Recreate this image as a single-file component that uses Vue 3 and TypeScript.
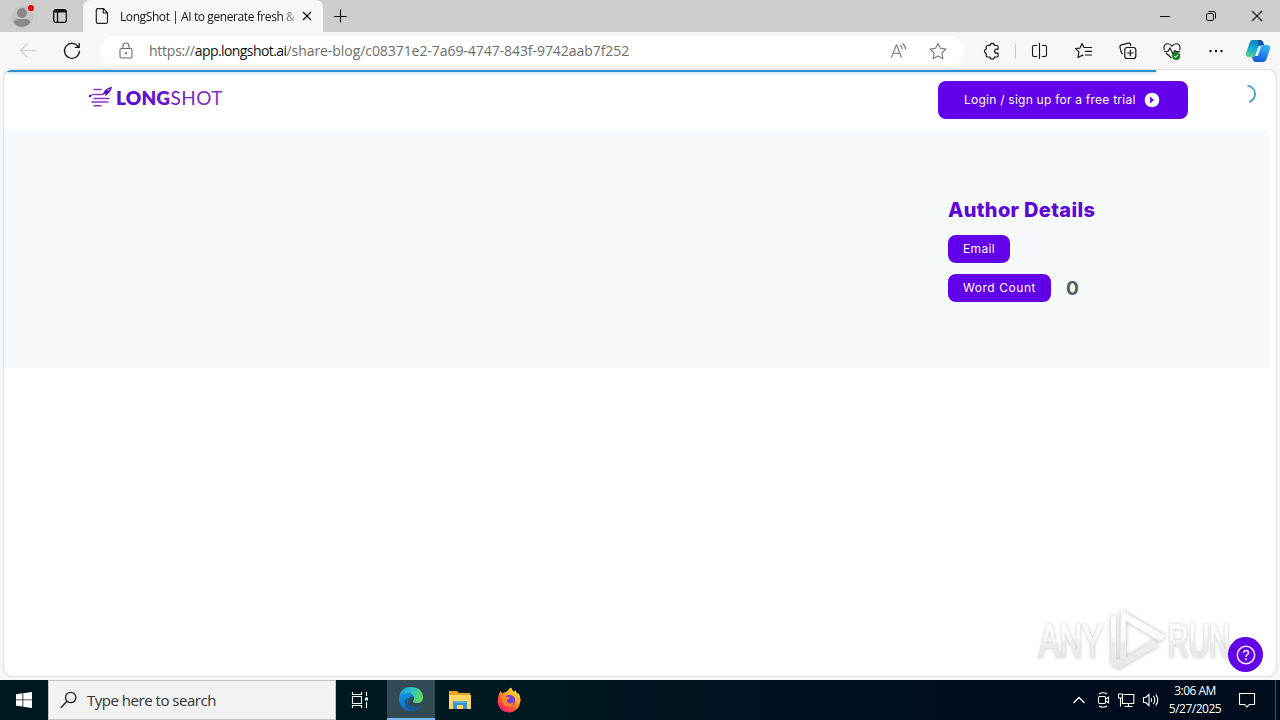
<script setup lang="ts">
interface UrlPart { text: string; kind: string }

const urlParts: UrlPart[] = [
  { text: 'https://', kind: 'scheme' },
  { text: 'app.longshot.ai', kind: 'host' },
  { text: '/share-blog/c08371e2-7a69-4747-843f-9742aab7f252', kind: 'path' },
]
const wordCount = 0
</script>

<template>
  <div class="desktop">
    <header class="tabstrip">
      <button class="profile" aria-label="Profile">
        <svg width="32" height="32" viewBox="0 0 32 32">
          <circle cx="16" cy="17" r="11" fill="#c6c4c3" />
          <circle cx="16" cy="13" r="5" fill="#8c8886" />
          <path d="M8 22.500q0-3.500 4-3.500h8q4 0 4 3.500-3 4.300-8 4.300t-8-4.300z" fill="#8c8886" />
          <circle cx="25" cy="8" r="3.100" fill="#e30613" />
        </svg>
      </button>
      <svg class="workspaces" width="16" height="16" viewBox="0 0 16 16" fill="none" stroke="#111" stroke-width="1.300">
        <rect x="1.700" y="1.700" width="12.600" height="12.600" rx="2.200" />
        <path d="M2 3.200h12" stroke-width="2.600" /><path d="M5.500 4v10" />
      </svg>
      <div class="tab">
        <svg width="14" height="18" viewBox="0 0 14 18" fill="none" stroke="#222" stroke-width="1.200">
          <path d="M2.800 1.600h5.700l4 4.200v9.100q0 1.500-1.500 1.500H2.800q-1.500 0-1.500-1.500V3.100q0-1.500 1.500-1.500zM8.300 1.800V6h4.200" />
        </svg>
        <span class="tab-title">LongShot | AI to generate fresh &amp;</span>
        <svg class="tab-close" width="10" height="10" viewBox="0 0 10 10" stroke="#111" stroke-width="1.200"><path d="M1 1l8 8M9 1L1 9" /></svg>
      </div>
      <svg class="new-tab" width="14" height="14" viewBox="0 0 14 14" stroke="#111" stroke-width="1.100"><path d="M6.500 .5v13M0 7.500h13" /></svg>
      <div class="window-buttons">
        <svg width="46" height="32" viewBox="0 0 46 32" stroke="#111"><path d="M18 16.500h10" /></svg>
        <svg width="46" height="32" viewBox="0 0 46 32" fill="none" stroke="#111">
          <rect x="18.500" y="13.500" width="7" height="7" rx="1.500" /><path d="M20.500 11.500h5q2 0 2 2v5" />
        </svg>
        <svg width="46" height="32" viewBox="0 0 46 32" stroke="#111" stroke-width="1.100"><path d="M18 11l10 10M28 11L18 21" /></svg>
      </div>
    </header>

    <nav class="toolbar">
      <svg class="back" width="18" height="18" viewBox="0 0 18 18" fill="none" stroke="#cbcbcb" stroke-width="1.100"><path d="M17 8.500H2M8.500 1.500l-7 7 7 7" /></svg>
      <svg class="reload" width="18" height="18" viewBox="0 0 18 18" fill="none" stroke="#1b1b1b" stroke-width="1.300"><path d="M15.500 5A7.500 7.500 0 1 0 16.500 9M16.200 1v4.300h-4.400" /></svg>
      <div class="address">
        <svg class="lock" width="14" height="18" viewBox="0 0 14 18" fill="none" stroke="#6b6b6b" stroke-width="1.100">
          <rect x="1" y="6.500" width="12" height="9.500" rx="1.500" /><path d="M4 6.500V4a3 3 0 0 1 6 0v2.500" /><circle cx="7" cy="11.300" r=".6" fill="#6b6b6b" />
        </svg>
        <span class="url"><span v-for="part in urlParts" :key="part.kind" :class="part.kind">{{ part.text }}</span></span>
        <svg class="read" width="18" height="18" viewBox="0 0 18 18" fill="none" stroke="#777" stroke-width="1.100">
          <path d="M1.500 15.500L6.300 3h.4l4.800 12.500M3.300 11.200h6.400M10.300 3.200q2 1.500 2.100 4M12.500 1.500q3 2 3.200 6" />
        </svg>
        <svg width="18" height="18" viewBox="0 0 18 18" fill="none" stroke="#777" stroke-width="1.100" stroke-linejoin="round">
          <path d="M9 1.300l2.400 5 5.500.8-4 3.900 1 5.500L9 13.900l-4.900 2.600 1-5.500-4-3.900 5.500-.8z" />
        </svg>
      </div>
      <svg class="extensions" width="20" height="20" viewBox="0 0 20 20" fill="none" stroke="#161616" stroke-width="1.200" stroke-linejoin="round">
        <path d="M5.500 4.500H8a2.200 2.200 0 0 1 4.400 0h2.400q1.300 0 1.300 1.300v2.400h-1.400a2 2 0 0 0 0 4h1.400v2.500q0 1.300-1.300 1.300h-2.400a2.200 2.200 0 0 1-4.400 0H5.500q-1.300 0-1.300-1.300v-2.300a2.200 2.200 0 0 1 0-4.300V5.800q0-1.300 1.300-1.300z" />
      </svg>
      <span class="separator" />
      <div class="actions">
        <svg width="20" height="20" viewBox="0 0 20 20" fill="none" stroke="#161616" stroke-width="1.100">
          <path d="M7 4.500H4q-1.500 0-1.500 1.500v8q0 1.500 1.500 1.500h3M12 4.500h3q1.500 0 1.500 1.500v8q0 1.500-1.500 1.500h-3M9.500 2v16" />
        </svg>
        <svg width="20" height="20" viewBox="0 0 20 20" fill="none" stroke="#161616" stroke-width="1.200" stroke-linejoin="round">
          <path d="M12 6.500h-2L8 2.500 6 7.100l-4.600.4 3.500 3.400L4 16.500l4.300-2.300 1 .8M12 6.500h6M11 10.300h7M11 14h7" />
        </svg>
        <svg width="20" height="20" viewBox="0 0 20 20" fill="none" stroke="#161616" stroke-width="1.200">
          <rect x="6.800" y="6.500" width="11" height="11" rx="2.300" /><path d="M12.300 8.800v6.400M9.100 12h6.400M4.800 13q-1-.3-1.500-1.500L2 6.300q-.4-2 1.500-2.500l6.800-1.600q1.600-.3 2.200 1l.5 1.500" />
        </svg>
        <svg width="20" height="20" viewBox="0 0 20 20" fill="none" stroke="#161616" stroke-width="1.100">
          <path d="M2.300 9Q1 4.500 4.300 3.100 7.500 2 10 5.100q2.500-3.100 5.700-2Q19 4.500 17.700 9M4 12l5.500 5M2 10.500h4L8 7l3 6 1.800-3.500 1.200 1h4" />
          <circle cx="14.200" cy="15" r="4" fill="#107c18" stroke="none" /><path d="M12.200 15l1.400 1.300 2.700-2.700" stroke="#d8f0d8" />
        </svg>
        <svg width="20" height="20" viewBox="0 0 20 20" fill="#161616"><circle cx="4.500" cy="10" r="1.200" /><circle cx="10" cy="10" r="1.200" /><circle cx="15.500" cy="10" r="1.200" /></svg>
      </div>
      <svg class="copilot" width="26" height="24" viewBox="0 0 26 24">
        <defs>
          <linearGradient id="cp-a" x1="0.500" y1="0" x2="0.300" y2="1"><stop stop-color="#087dbe" /><stop offset=".5" stop-color="#12aed8" /><stop offset="1" stop-color="#55cf87" /></linearGradient>
          <linearGradient id="cp-b" x1="0.600" y1="0" x2="0.300" y2="1"><stop stop-color="#35b5f4" /><stop offset=".5" stop-color="#2685ed" /><stop offset="1" stop-color="#1657d0" /></linearGradient>
        </defs>
        <path d="M8 1h7q2.500 0 3.200 2.500l.8 2.500h-2.500Q14 6 13.200 8.500l-2.400 7Q10 18 7.500 18H4Q0 18 1 14L4.500 4Q5.500 1 8 1z" fill="url(#cp-a)" />
        <path d="M18 23h-7q-2.500 0-3.200-2.500L7 18q3 0 3.800-2.500l2.400-7Q14 6 16.500 6H22q4 0 3 4l-3.500 10q-1 3-3.500 3z" fill="url(#cp-b)" />
        <path d="M13 1h2q2.500 0 3.200 2.500L19 6h-2.500q-2 0-3 1.500z" fill="#174dac" />
        <path d="M13.800 7h2.500l-3.600 10h-2.500z" fill="#eefbff" />
      </svg>
    </nav>

    <main class="page">
      <div class="progress" />
      <section class="site-header">
        <svg class="logo" width="136" height="24" viewBox="0 0 136 24">
          <defs><linearGradient id="logo-fill" gradientUnits="userSpaceOnUse" x1="0" y1="0" x2="136" y2="0"><stop stop-color="#7027bd" /><stop offset=".3" stop-color="#5609d4" /><stop offset="1" stop-color="#8735c5" /></linearGradient></defs>
          <g fill="none" stroke="#8a35c8" stroke-width="1.400" stroke-linecap="round"><path d="M6 4.500h7M2 11q3-2 6-1.500h7M6 13.500h15M4 17h16M6 20.800h7" /></g>
          <path d="M15 8.500l2-3.500q2-2 7-3.500-.5 4.500-3 6.500l-3.500 3-.7-2.200-2 .6z" fill="#5610bd" /><circle cx="20.500" cy="4.800" r="1" fill="#b899e4" /><circle cx="2" cy="11" r="1.300" fill="#5610bd" />
          <text x="28" y="20" textLength="54" class="logo-bold">LONG</text>
          <text x="82.500" y="20" textLength="52" class="logo-thin">SHOT</text>
        </svg>
        <a class="login">
          <span>Login / sign up for a free trial</span>
          <svg width="16" height="16" viewBox="0 0 16 16"><circle cx="8" cy="8" r="7.300" fill="#fff" /><path d="M6.300 5l3.300 3-3.300 3z" fill="#6200ea" stroke="#6200ea" stroke-width=".7" /></svg>
        </a>
        <svg class="spinner" width="20" height="20" viewBox="0 0 20 20" fill="none" stroke="#4fa4ce" stroke-width="1.900"><path d="M9.500 1.800A8.200 8.200 0 0 1 11 17.900" /></svg>
      </section>
      <section class="article">
        <aside class="author">
          <h2>Author Details</h2>
          <div class="detail"><span class="pill">Email</span></div>
          <div class="detail"><span class="pill wide">Word Count</span><b>{{ wordCount }}</b></div>
        </aside>
      </section>
    </main>

    <div class="watermark">
      <svg width="200" height="68" viewBox="0 0 200 68">
        <defs><linearGradient id="mark-fill" x1="0" y1="0" x2="0" y2="1"><stop stop-color="#fff" /><stop offset=".45" stop-color="#fbfbfb" /><stop offset=".55" stop-color="#ededed" /><stop offset="1" stop-color="#e6e6e6" /></linearGradient></defs>
        <g class="mark-text">
          <text x="3" y="50" textLength="64" lengthAdjust="spacingAndGlyphs">ANY</text>
          <text x="132" y="50" textLength="62" lengthAdjust="spacingAndGlyphs">RUN</text>
        </g>
        <g class="mark-shape">
          <path d="M75 10l5-2v44l4 3v8l-9-6zM85 3l43 25v4l-5 2-33-20v36l27-16 6 4-38 23-5-3v-4l4-3z" />
        </g>
      </svg>
    </div>
    <button class="help" aria-label="Help">
      <svg width="20" height="20" viewBox="0 0 20 20" fill="none" stroke="#f6e9ff" stroke-width="1.500"><circle cx="10" cy="10" r="8.700" /><path d="M7.500 7.800Q7.700 5.500 10 5.500t2.500 2.200q0 1.300-1.500 2.200-1 .7-1 2.100" /><circle cx="10" cy="14.300" r=".4" /></svg>
    </button>

    <footer class="taskbar">
      <div class="start"><svg width="16" height="16" viewBox="0 0 16 16" fill="#fff"><path d="M0 2.300L6.500 1.300v6.200H0zM7.300 1.200L16 0v7.500H7.300zM0 8.300h6.500v6.300L0 13.700zM7.300 8.300H16V16l-8.700-1.200z" /></svg></div>
      <div class="search">
        <svg width="18" height="18" viewBox="0 0 18 18" fill="none" stroke="#222" stroke-width="1.300"><circle cx="10.700" cy="6.500" r="5.200" /><path d="M7 10.300L.7 16.700" /></svg>
        <span>Type here to search</span>
      </div>
      <div class="task">
        <svg width="18" height="18" viewBox="0 0 18 18" fill="none" stroke="#fff" stroke-width="1.100"><path d="M1.500 1v2.500h9V1M1.500 17v-2.500h9V17M1.500 5.500h9v7h-9zM15.500 1v4M15.500 11v6" /><path d="M14 6.500h3v3h-3z" fill="#fff" stroke="none" /></svg>
      </div>
      <div class="task active">
        <svg width="26" height="26" viewBox="0 0 26 26">
          <defs>
            <linearGradient id="edge-a" x1="0" y1="0.300" x2="1" y2="0.500"><stop stop-color="#219bdc" /><stop offset=".5" stop-color="#2cc2c5" /><stop offset="1" stop-color="#65dc55" /></linearGradient>
            <linearGradient id="edge-b" x1="0" y1="0" x2="0.600" y2="1"><stop stop-color="#1796e2" /><stop offset="1" stop-color="#0869bd" /></linearGradient>
          </defs>
          <path d="M1.200 12Q2 1 13 1q11 0 12 10 0 6-6 6-4 0-4-2 2-2 .5-4.500Q13 6.500 8 7.500 3 8.500 1.200 12z" fill="url(#edge-a)" />
          <path d="M1 13Q2 7 8.500 7q5 0 7 4-4-1-5.500 2.500-1.500 4 2 7.500 3.500 3 10.500-.5Q19 25 13 25 2 24.500 1 13z" fill="url(#edge-b)" />
          <path d="M10 11.500q-2.500 4 .5 7.500 4 4 12 1-4 4.500-9.500 4.500Q6 22 6.800 16q.7-3 3.200-4.500z" fill="#12559f" />
        </svg>
      </div>
      <div class="task">
        <svg width="24" height="22" viewBox="0 0 24 22"><path d="M1 2h8l2 2h11v16H1z" fill="#e8a520" /><path d="M1 6h22v14H1z" fill="#ffd767" /><path d="M5 20v-7q0-1 1-1h12q1 0 1 1v7h-4v-4H9v4z" fill="#3295d5" /><path d="M7 12h10v2H7z" fill="#65aee0" /></svg>
      </div>
      <div class="task">
        <svg width="26" height="26" viewBox="0 0 26 26">
          <defs><linearGradient id="fox" x1="0.900" y1="0" x2="0.200" y2="1"><stop stop-color="#fff24a" /><stop offset=".4" stop-color="#ffa51e" /><stop offset=".7" stop-color="#ff4c3f" /><stop offset="1" stop-color="#e51675" /></linearGradient></defs>
          <path d="M3.500 6l1-2 2 2.500Q8 5 10 5l2-1.500Q13 1 15.500.8q0 2 2.500 4l1.200-1.500 2 3.200 1.300-.3Q25 10 24.500 14 23 25 13 25.500 3 25 1.500 15q0-5 2-9z" fill="url(#fox)" />
          <circle cx="13.500" cy="13.500" r="5.700" fill="#7541d8" /><path d="M6 9q3-1 5 1l3 .5q-1 2-3 2.200-1 2 1.500 3.300 3 1.200 5-1-1 5-6 4.500Q5 18 6 9z" fill="#ff8a20" />
        </svg>
      </div>
      <div class="tray">
        <svg width="24" height="20" viewBox="0 0 24 20" fill="none" stroke="#fff" stroke-width="1.300"><path d="M6.500 13L12 7.500l5.500 5.500" /></svg>
        <svg width="24" height="20" viewBox="0 0 24 20" fill="none" stroke="#fff" stroke-width="1.100"><rect x="7.500" y="6.500" width="7" height="7" rx="1.200" /><path d="M14.500 9l3-1.700v5.400l-3-1.700M8 4q4-2.500 8 0M8 16q4 2.500 8 0" /></svg>
        <svg width="24" height="20" viewBox="0 0 24 20" fill="none" stroke="#fff" stroke-width="1.100"><path d="M8.500 4.500h10.300v9H7.500v-5M13.500 13.500v3M9.500 16.500h8M3.500 4h4v4h-4zM5.500 8v8.500" /></svg>
        <svg width="24" height="20" viewBox="0 0 24 20" fill="none" stroke="#fff" stroke-width="1.100"><path d="M4.500 7.500h2.200l3.300-3v11l-3.300-3H4.500zM12 8q1.500 2 0 4M14.300 6q3 4 0 8M16.700 4.500q4.200 5.500 0 11" /></svg>
      </div>
      <div class="clock"><span class="time">3:06 AM</span><span class="date">5/27/2025</span></div>
      <svg class="notice" width="18" height="18" viewBox="0 0 18 18" fill="none" stroke="#fff" stroke-width="1.100"><path d="M1.500 2.500h15v11h-5L9 16l-2.500-2.500h-5z" /></svg>
      <span class="show-desktop" />
    </footer>
  </div>
</template>

<style>
html, body { overflow: hidden; }
</style>

<style scoped>
.desktop { position: relative; box-sizing: border-box; width: 1280px; height: 720px; display: flex; flex-direction: column; background: #f7f7f7; font-family: "Open Sans", "Noto Sans", sans-serif; color: #111; white-space: nowrap; overflow: hidden; }
svg { display: block; flex: none; }
button { border: 0; padding: 0; background: none; }
.tabstrip { height: 32px; flex: none; display: flex; align-items: center; background: #cdcdcd; }
.profile { margin-left: 6px; }
.workspaces { margin-left: 14px; }
.tab { box-sizing: border-box; width: 240px; height: 32px; margin-left: 15px; padding-left: 12px; display: flex; align-items: center; background: #f7f7f7; border-radius: 7px 7px 0 0; }
.tab-title { width: 177px; margin-left: 11px; font-size: 12px; letter-spacing: -.41px; -webkit-mask-image: linear-gradient(90deg, #000 160px, transparent 182px); mask-image: linear-gradient(90deg, #000 160px, transparent 182px); }
.tab-close { margin-left: 5px; }
.new-tab { margin-left: 11px; }
.window-buttons { display: flex; margin-left: auto; }
.toolbar { height: 38px; flex: none; display: flex; align-items: center; background: #f7f7f7; }
.back { margin-left: 19px; }
.reload { margin-left: 26px; }
.address { box-sizing: border-box; width: 864px; height: 30px; margin-left: 19px; padding: 0 17px 0 19px; display: flex; align-items: center; background: #fff; border-radius: 15px; }
.url { margin-left: 16px; margin-top: -1px; font-size: 14px; color: #6d6d6d; }
.scheme { letter-spacing: -.25px; }
.host { color: #111; letter-spacing: -.58px; }
.path { letter-spacing: -.06px; }
.read { margin-left: auto; margin-right: 21px; }
.extensions { margin-left: 18px; }
.separator { width: 1px; height: 15px; margin-left: 13px; background: #c8c8c8; }
.actions { display: flex; gap: 24px; margin-left: 14px; }
.copilot { margin-left: 19px; }
.page { box-sizing: border-box; width: 1272px; height: 606px; margin-left: 4px; flex: none; overflow: hidden; background: #fff; border-radius: 8px; box-shadow: 0 0 2px #aaa; }
.progress { width: 1152px; height: 2px; background: #3290d0; box-shadow: 0 0 4px #72bae4; }
.site-header { height: 58px; display: flex; align-items: flex-start; }
.logo { margin: 13px 0 0 84px; }
.logo-bold { font: 800 19px Lato, sans-serif; fill: url(#logo-fill); }
.logo-thin { font: 400 19px Lato, sans-serif; fill: url(#logo-fill); }
.login { box-sizing: border-box; width: 250px; height: 38px; margin: 9px 0 0 714px; padding-left: 26px; display: flex; align-items: center; border-radius: 8px; background: #6200ea; color: #fff; font: 400 12px Inter, sans-serif; }
.login span { width: 171px; letter-spacing: .24px; margin-top: -1px; }
.login svg { margin-left: 9px; }
.spinner { margin: 12px 0 0 50px; }
.article { box-sizing: border-box; width: 1266px; height: 238px; padding: 66px 0 0 944px; background: #f7fafc; }
.author { display: flex; flex-direction: column; }
h2 { height: 28px; margin: 0 0 11px; font: 800 20px/28px Inter, sans-serif; letter-spacing: .34px; color: #5c06da; }
.detail { height: 28px; margin-bottom: 11px; display: flex; align-items: center; font-family: Inter, sans-serif; }
.pill { box-sizing: border-box; width: 62px; height: 28px; border-radius: 8px; background: #6200ea; color: #fff; font-size: 12px; line-height: 27px; text-align: center; letter-spacing: .3px; }
.wide { width: 103px; letter-spacing: .55px; }
.detail b { margin-left: 15px; font-size: 19px; color: #555b60; }
.watermark { position: absolute; left: 1036px; top: 607px; }
.mark-text { font: 400 47px "Liberation Sans", sans-serif; fill: url(#mark-fill); stroke: url(#mark-fill); stroke-width: 1.5; filter: drop-shadow(0 0 1.5px #c2c2c2); }
.mark-shape { fill: url(#mark-fill); filter: drop-shadow(0 0 2px #b8b8b8); }
.help { position: absolute; left: 1228px; top: 637px; width: 35px; height: 35px; border-radius: 50%; background: #6200ea; display: flex; align-items: center; justify-content: center; }
.taskbar { box-sizing: border-box; height: 40px; margin-top: 4px; flex: none; display: flex; background: linear-gradient(90deg, #001820 0, #001820 40%, #000b1b 85%); color: #fff; }
.start, .task { width: 48px; display: flex; align-items: center; justify-content: center; }
.search { box-sizing: border-box; width: 288px; height: 40px; padding-left: 11px; display: flex; align-items: center; background: #f2f2f2; border: 1px solid #c5c5c5; color: #333; }
.search span { margin-left: 9px; font-size: 15px; letter-spacing: -.48px; }
.task { width: 49px; box-sizing: border-box; }
.search + .task { width: 51px; padding-right: 3px; }
.active { width: 48px; background: #334b55; border-bottom: 2px solid #76b9ed; }
.tray { display: flex; align-items: center; margin-left: 534px; }
.clock { width: 64px; display: flex; flex-direction: column; align-items: center; font-size: 12px; line-height: 18px; padding-top: 2px; letter-spacing: -.5px; }
.notice { margin: 11px 0 0 11px; }
.show-desktop { width: 1px; margin-left: auto; margin-right: 4px; background: #46505a; }
</style>
